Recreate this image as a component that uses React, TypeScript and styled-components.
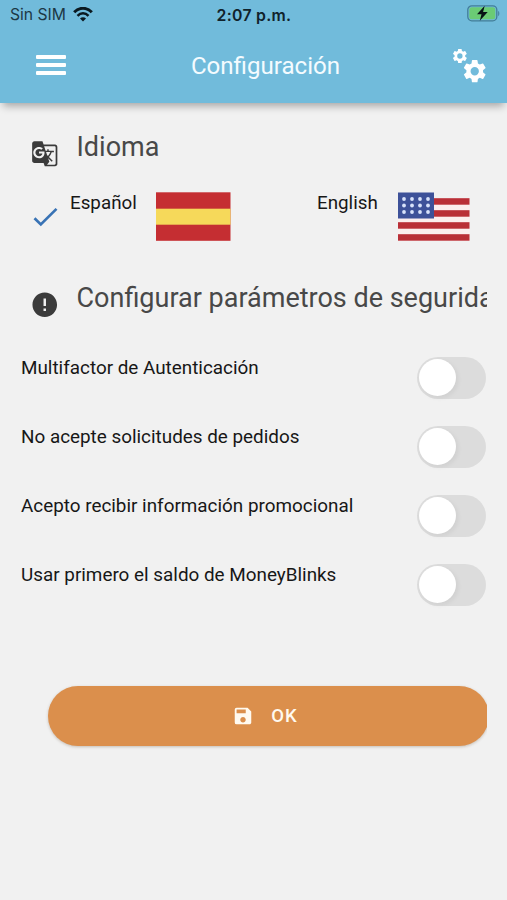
import React, { useState } from "react";
import styled, { createGlobalStyle } from "styled-components";
import { MdError, MdGTranslate, MdSave } from "react-icons/md";

const GlobalStyle = createGlobalStyle`
  * { box-sizing: border-box; }
  body { margin: 0; background: #f1f1f1; font-family: Roboto, "Liberation Sans", sans-serif; }
`;

const Screen = styled.div`
  width: 100%;
  height: 900px;
  overflow: hidden;
  background: #f1f1f1;
`;

const Header = styled.header`
  height: 103px;
  background: #71bbdb;
  box-shadow: 0 6px 8px -3px rgba(0, 0, 0, 0.32);
`;

const StatusBar = styled.div`
  display: grid;
  grid-template-columns: 1fr auto 1fr;
  align-items: center;
  height: 30px;
  padding: 0 8px 0 10px;
  font-family: Inter, sans-serif;
  color: #10222b;
`;

const Carrier = styled.div`
  display: flex;
  align-items: center;
  gap: 7px;
  padding-bottom: 1px;
  white-space: nowrap;
  font-size: 15.7px;
  color: #1c3845;
`;

const Clock = styled.div`
  margin-left: -1px;
  font-size: 15.8px;
  font-weight: 600;
  letter-spacing: 0.3px;
`;

const BatterySlot = styled.div`
  display: flex;
  justify-content: flex-end;
  margin-right: -1px;
  padding-bottom: 3px;
`;

const Toolbar = styled.div`
  display: grid;
  grid-template-columns: 1fr auto 1fr;
  align-items: center;
  height: 73px;
  padding: 0 20px 3px 36px;
`;

const PageTitle = styled.h1`
  margin: 1px 0 0 8px;
  font-size: 24.1px;
  font-weight: 400;
  line-height: 30px;
  color: #f4fbff;
`;

const MenuButton = styled.button`
  display: flex;
  flex-direction: column;
  gap: 4px;
  width: 30px;
  padding: 0;
  border: 0;
  background: none;
`;

const MenuBar = styled.span`
  height: 4px;
  border-radius: 1px;
  background: #fff;
`;

const GearSlot = styled.div`
  display: flex;
  justify-content: flex-end;
`;

const Content = styled.main`
  margin-right: 20px;
  padding: 22px 0 20px 21px;
  overflow: hidden;
`;

const SectionHeading = styled.div`
  display: flex;
  height: 45px;
  color: #3b3b3b;
`;

const IconSlot = styled.div<{ $top: number }>`
  display: flex;
  justify-content: center;
  flex: none;
  width: 47px;
  margin-right: 8.5px;
  padding-top: ${(p) => p.$top}px;
`;

const SectionTitle = styled.h2`
  margin: 0;
  font-size: 27px;
  font-weight: 400;
  line-height: 44px;
  white-space: nowrap;
  color: #484848;
`;

const Languages = styled.div`
  display: grid;
  grid-template-columns: 12px 37px 86px 75px 86px 81px 73px;
  height: 106px;
  padding-top: 22px;
`;

const LanguageName = styled.span`
  font-size: 18.8px;
  line-height: 23px;
  color: #171717;
`;

const Settings = styled.div`
  display: flex;
  flex-direction: column;
  margin-top: 36.2px;
`;

const SettingRow = styled.label`
  display: flex;
  justify-content: space-between;
  height: 68.8px;
`;

const SettingLabel = styled.span`
  font-size: 18.87px;
  line-height: 22px;
  white-space: nowrap;
  color: #171717;
`;

const Toggle = styled.button<{ $on: boolean }>`
  display: flex;
  justify-content: ${(p) => (p.$on ? "flex-end" : "flex-start")};
  align-items: center;
  width: 69px;
  height: 42px;
  margin-right: 1px;
  padding: 0 2px 1px;
  border: 0;
  border-radius: 21px;
  background: ${(p) => (p.$on ? "#71bbdb" : "#dcdcdc")};
`;

const Thumb = styled.span`
  width: 37px;
  height: 37px;
  border-radius: 50%;
  background: #fff;
  box-shadow: 2px 2px 5px rgba(0, 0, 0, 0.06);
`;

const SaveButton = styled.button`
  display: flex;
  justify-content: center;
  align-items: center;
  gap: 17px;
  width: 441px;
  height: 60px;
  margin: 53.8px 0 0 27px;
  padding: 0 7px 0 0;
  border: 0;
  border-radius: 30px;
  background: #db8f4c;
  box-shadow: 0 1px 3px rgba(90, 60, 30, 0.28);
  font-family: Roboto, sans-serif;
  font-size: 18.5px;
  font-weight: 500;
  letter-spacing: 1.1px;
  color: #fffaf0;
`;

function WifiIcon() {
  return (
    <svg width="20" height="15" viewBox="0 0 20 15" fill="none" stroke="#0b1920" strokeWidth="2.9">
      <path d="M1.2 5.3C6-.1 14 -.1 18.8 5.3" />
      <path d="M4.5 8.8c3.2-3.3 7.8-3.3 11 0" strokeWidth="2.5" />
      <path d="M7 11.5c1.7-1.6 4.3-1.6 6 0l-3 3z" fill="#0b1920" stroke="none" />
    </svg>
  );
}

function BatteryIcon() {
  return (
    <svg width="33" height="17" viewBox="0 0 33 17">
      <rect x=".8" y=".8" width="29" height="15" rx="4" fill="#71bbdb" stroke="#437e98" strokeWidth="1.3" />
      <rect x="2.3" y="2.3" width="26" height="12" rx="2.5" fill="#6bcb75" />
      <path d="M31.2 6v5c1.5-.6 1.5-4.4 0-5z" fill="#437e98" />
      <path d="M17.7.8 10 9.2h4.5l-1.7 6.6 7.9-8.7h-4.6z" fill="#071215" />
    </svg>
  );
}

const GEAR_PATH =
  "M19.14 12.94c.04-.3.06-.61.06-.94 0-.32-.02-.64-.07-.94l2.03-1.58a.49.49 0 0 0 .12-.61l-1.92-3.32a.49.49 0 0 0-.59-.22l-2.39.96c-.5-.38-1.03-.7-1.62-.94l-.36-2.54A.48.48 0 0 0 13.92 2.4h-3.84c-.24 0-.43.17-.47.41l-.36 2.54c-.59.24-1.13.57-1.62.94l-2.39-.96a.48.48 0 0 0-.59.22L2.74 8.87c-.12.21-.08.47.12.61l2.03 1.58c-.05.3-.09.63-.09.94s.02.64.07.94l-2.03 1.58a.49.49 0 0 0-.12.61l1.92 3.32c.12.22.37.29.59.22l2.39-.96c.5.38 1.03.7 1.62.94l.36 2.54c.05.24.24.41.48.41h3.84c.24 0 .44-.17.47-.41l.36-2.54c.59-.24 1.13-.56 1.62-.94l2.39.96c.22.08.47 0 .59-.22l1.92-3.32a.48.48 0 0 0-.12-.61l-2.01-1.58zM12 15.6a3.6 3.6 0 1 1 0-7.2 3.6 3.6 0 0 1 0 7.2z";

function GearsIcon() {
  return (
    <svg width="36" height="36" viewBox="0 0 36 36" fill="#fff">
      <path transform="translate(0 .1) scale(.74)" d={GEAR_PATH} />
      <path transform="translate(9.8 10.3) scale(1.16)" d={GEAR_PATH} />
    </svg>
  );
}

function CheckIcon() {
  return (
    <svg width="25" height="50" viewBox="0 0 25 50" fill="none" stroke="#3973b5" strokeWidth="2.7">
      <path d="m1.5 26.2 6.3 6.2L23.5 16.9" />
    </svg>
  );
}

function SpainFlag() {
  return (
    <svg width="75" height="49" viewBox="0 0 75 49">
      <rect y=".3" width="74.5" height="48.5" fill="#c52e32" />
      <rect y="16.7" width="74.5" height="16" fill="#f6d95a" />
    </svg>
  );
}

function UsaFlag() {
  const columns = [6, 14, 22, 30];
  const rows = [7, 13.5, 20];
  return (
    <svg width="73" height="49" viewBox="0 0 73 49">
      <rect y="6" width="71.5" height="43" fill="#fbeeee" />
      {[6.2, 18.2, 30.2, 42.2].map((y) => (
        <rect key={y} y={y} width="71.5" height="6.5" fill="#b92f37" />
      ))}
      <rect y=".5" width="36" height="26" fill="#3d5199" />
      {rows.flatMap((y) => columns.map((x) => <circle key={`${x}-${y}`} cx={x} cy={y} r="1.9" fill="#d8e2fa" />))}
    </svg>
  );
}

const OPTIONS = [
  "Multifactor de Autenticación",
  "No acepte solicitudes de pedidos",
  "Acepto recibir información promocional",
  "Usar primero el saldo de MoneyBlinks",
];

export default function App() {
  const [enabled, setEnabled] = useState<boolean[]>(OPTIONS.map(() => false));
  const flip = (index: number) => setEnabled((values) => values.map((v, i) => (i === index ? !v : v)));

  return (
    <Screen>
      <GlobalStyle />
      <Header>
        <StatusBar>
          <Carrier>
            Sin SIM
            <WifiIcon />
          </Carrier>
          <Clock>2:07 p.m.</Clock>
          <BatterySlot>
            <BatteryIcon />
          </BatterySlot>
        </StatusBar>
        <Toolbar>
          <MenuButton aria-label="Menú">
            <MenuBar />
            <MenuBar />
            <MenuBar />
          </MenuButton>
          <PageTitle>Configuración</PageTitle>
          <GearSlot>
            <GearsIcon />
          </GearSlot>
        </Toolbar>
      </Header>
      <Content>
        <SectionHeading>
          <IconSlot $top={15}>
            <MdGTranslate size={27.5} />
          </IconSlot>
          <SectionTitle>Idioma</SectionTitle>
        </SectionHeading>
        <Languages>
          <span />
          <CheckIcon />
          <LanguageName>Español</LanguageName>
          <SpainFlag />
          <span />
          <LanguageName>English</LanguageName>
          <UsaFlag />
        </Languages>
        <SectionHeading>
          <IconSlot $top={14}>
            <MdError size={29.5} />
          </IconSlot>
          <SectionTitle>Configurar parámetros de seguridad</SectionTitle>
        </SectionHeading>
        <Settings>
          {OPTIONS.map((option, i) => (
            <SettingRow key={option}>
              <SettingLabel>{option}</SettingLabel>
              <Toggle $on={enabled[i]} role="switch" aria-checked={enabled[i]} onClick={() => flip(i)}>
                <Thumb />
              </Toggle>
            </SettingRow>
          ))}
        </Settings>
        <SaveButton>
          <MdSave size={22} />
          OK
        </SaveButton>
      </Content>
    </Screen>
  );
}
